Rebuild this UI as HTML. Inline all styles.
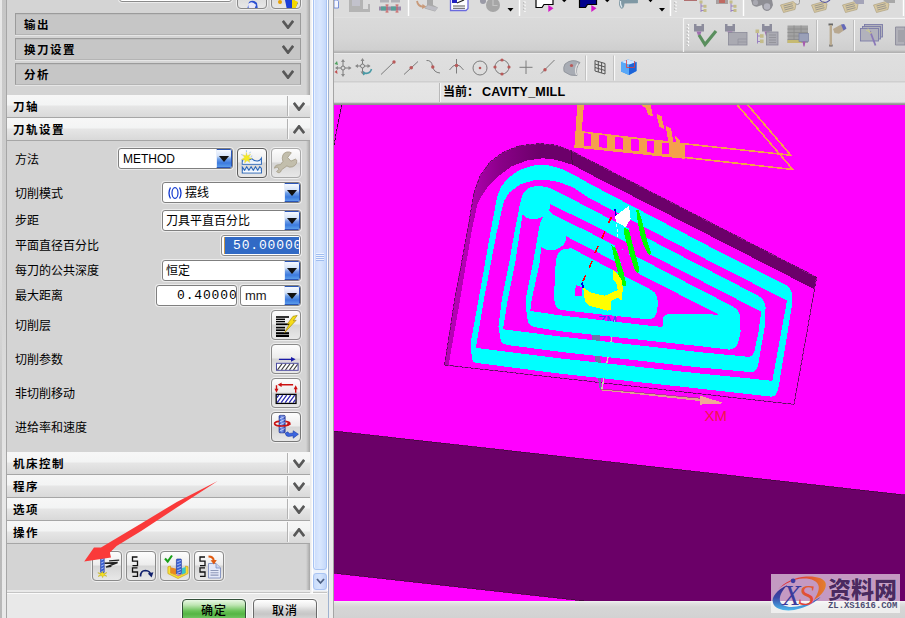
<!DOCTYPE html>
<html lang="zh-CN">
<head>
<meta charset="utf-8">
<title>CAVITY_MILL</title>
<style>
html,body{margin:0;padding:0;}
body{width:905px;height:618px;overflow:hidden;position:relative;background:#d4d4d4;
  font-family:"Liberation Sans","Noto Sans CJK SC",sans-serif;font-size:12px;color:#000;line-height:1;}
.a{position:absolute;box-sizing:border-box;}
.cn{font-family:"Liberation Sans","Noto Sans CJK SC",sans-serif;}
/* left frame */
#lb{left:0;top:0;width:7px;height:618px;background:linear-gradient(#c6c6c6,#d2d2d2 45%,#e8e8e8 80%,#e9e9e9);}
#lb:before{content:"";position:absolute;left:0;top:0;width:1.5px;height:618px;background:linear-gradient(#e8e8e8,#dcdcdc 45%,#bcbcbc 80%,#b8b8b8);}
#lb:after{content:"";position:absolute;left:5.6px;top:0;width:1.4px;height:618px;background:#a6a6a6;}
#panel{left:7px;top:0;width:303px;height:590px;background:#d4d4d4;}
#pshadow{left:306px;top:0;width:4px;height:590px;background:linear-gradient(90deg,rgba(150,150,150,0),rgba(150,150,150,.75));}
#foot{left:7px;top:590px;width:321px;height:28px;background:#e9e9e9;}
#footline{left:7px;top:592px;width:320px;height:2px;background:linear-gradient(#c4c4c4 0,#c4c4c4 1px,#fbfbfb 1px);}
/* sub groups */
.sg{left:15px;width:286px;height:22px;background:#c6c6c6;border:1px solid #9b9b9b;border-bottom-color:#b4b4b4;box-shadow:0 1px 0 #e6e6e6, inset 0 1px 0 #bdbdbd;}
.sg span{position:absolute;left:8px;top:5.5px;font-weight:bold;font-size:11.5px;letter-spacing:1.5px;}
.chev{position:absolute;width:12px;height:9px;}
/* headers */
.hd{left:7px;width:303px;height:23px;border-bottom:1px solid #a6a6a6;
  background:linear-gradient(#f7f7f7 0,#f3f4f4 10px,#e6e6e6 11px,#d9d9d9 22px);}
.hd span{position:absolute;left:6px;top:6.5px;font-weight:bold;font-size:11.5px;letter-spacing:1.5px;}
.hd i{position:absolute;left:280px;top:1px;width:2px;height:20px;background:linear-gradient(90deg,#b3b3b3 0,#b3b3b3 1px,#fafafa 1px);}
.lbl{left:15px;font-size:12px;white-space:nowrap;}
/* inputs */
.cb{height:21px;background:#fff;border:1px solid #7f7f7f;border-radius:3px;box-shadow:0 0 0 1px rgba(255,255,255,.55);font-size:12px;white-space:nowrap;overflow:hidden;}
.cb .t{position:absolute;left:4px;top:4px;}
.dd{position:absolute;right:0;top:0;width:16px;height:19px;border-radius:0 2px 2px 0;border:1px solid #2a55b8;border-left:1px solid #e8eefa;
  background:linear-gradient(#f6f9fe 0,#d5e3f9 6px,#6f9fe6 9px,#3c7ade 13px,#6aaef0 19px);box-sizing:border-box;}
.dd:after{content:"";position:absolute;left:2px;top:6px;border:5px solid transparent;border-top:6px solid #101010;border-bottom:0;}
.ib{width:30px;height:30px;border:1px solid #8a8a8a;border-radius:4px;box-shadow:0 0 0 1px rgba(255,255,255,.6);
  background:linear-gradient(#fdfdfd 0,#ececec 13px,#d6d6d6 14px,#e9e9e9 29px);overflow:hidden;}
.mono{font-family:"Liberation Mono",monospace;font-size:13px;letter-spacing:.85px;}
</style>
</head>
<body>
<div class="a" id="lb"></div>
<div class="a" id="panel"></div>
<div class="a" id="pshadow"></div>
<div class="a" id="foot"></div>
<div class="a" id="footline"></div>

<!-- top cut-off controls -->
<div class="a" style="left:119px;top:-20px;width:113px;height:22px;background:#fff;border:1px solid #8a8a8a;border-radius:3px;box-shadow:0 0 0 1px rgba(255,255,255,.55)"></div>
<div class="a ib" style="left:237px;top:-21px"><svg class="a" style="left:0;top:0" width="30" height="30"><path d="M9 30 L11 22 Q15 19 19 23 L20 30Z" fill="#2a4fd0"/><path d="M10 24 Q14 20 18 25 L16 30 L11 30Z" fill="#e8e8f8"/></svg></div>
<div class="a ib" style="left:271px;top:-21px"><svg class="a" style="left:0;top:0" width="30" height="30"><path d="M13 20 L20 19 L26 23 L22 30 L15 30Z" fill="#1c3fd8"/><path d="M20 19 L26 22 L23 30 L20 30Z" fill="#f4d800"/><circle cx="8" cy="22" r="2" fill="#e8a000"/></svg></div>

<!-- sub groups -->
<div class="a sg" style="top:13px"><span>输出</span><svg class="chev" style="left:266px;top:6px" viewBox="0 0 12 9"><path d="M0.8 0.8 L6 7.6 L11.2 0.8" fill="none" stroke="#585858" stroke-width="2.7"/></svg></div>
<div class="a sg" style="top:38px"><span>换刀设置</span><svg class="chev" style="left:266px;top:6px" viewBox="0 0 12 9"><path d="M0.8 0.8 L6 7.6 L11.2 0.8" fill="none" stroke="#585858" stroke-width="2.7"/></svg></div>
<div class="a sg" style="top:63px"><span>分析</span><svg class="chev" style="left:266px;top:6px" viewBox="0 0 12 9"><path d="M0.8 0.8 L6 7.6 L11.2 0.8" fill="none" stroke="#585858" stroke-width="2.7"/></svg></div>

<!-- headers -->
<div class="a hd" style="top:95px"><span>刀轴</span><i></i><svg class="chev" style="left:286px;top:7px" viewBox="0 0 12 9"><path d="M0.8 0.8 L6 7.6 L11.2 0.8" fill="none" stroke="#585858" stroke-width="2.7"/></svg></div>
<div class="a hd" style="top:118px"><span>刀轨设置</span><i></i><svg class="chev" style="left:286px;top:7px" viewBox="0 0 12 9"><path d="M0.8 8.2 L6 1.4 L11.2 8.2" fill="none" stroke="#585858" stroke-width="2.7"/></svg></div>
<div class="a hd" style="top:452px"><span>机床控制</span><i></i><svg class="chev" style="left:286px;top:7px" viewBox="0 0 12 9"><path d="M0.8 0.8 L6 7.6 L11.2 0.8" fill="none" stroke="#585858" stroke-width="2.7"/></svg></div>
<div class="a hd" style="top:475px"><span>程序</span><i></i><svg class="chev" style="left:286px;top:7px" viewBox="0 0 12 9"><path d="M0.8 0.8 L6 7.6 L11.2 0.8" fill="none" stroke="#585858" stroke-width="2.7"/></svg></div>
<div class="a hd" style="top:498px"><span>选项</span><i></i><svg class="chev" style="left:286px;top:7px" viewBox="0 0 12 9"><path d="M0.8 0.8 L6 7.6 L11.2 0.8" fill="none" stroke="#585858" stroke-width="2.7"/></svg></div>
<div class="a hd" style="top:521px"><span>操作</span><i></i><svg class="chev" style="left:286px;top:7px" viewBox="0 0 12 9"><path d="M0.8 8.2 L6 1.4 L11.2 8.2" fill="none" stroke="#585858" stroke-width="2.7"/></svg></div>

<!-- labels -->
<div class="a lbl" style="top:154px">方法</div>
<div class="a lbl" style="top:188px">切削模式</div>
<div class="a lbl" style="top:215px">步距</div>
<div class="a lbl" style="top:240px">平面直径百分比</div>
<div class="a lbl" style="top:265px">每刀的公共深度</div>
<div class="a lbl" style="top:290px">最大距离</div>
<div class="a lbl" style="top:320px">切削层</div>
<div class="a lbl" style="top:354px">切削参数</div>
<div class="a lbl" style="top:388px">非切削移动</div>
<div class="a lbl" style="top:422px">进给率和速度</div>

<!-- controls -->
<div class="a cb" style="left:118px;top:148px;width:115px"><span class="t">METHOD</span><div class="dd"></div></div>
<div class="a cb" style="left:162px;top:182px;width:139px"><svg class="a" style="left:3px;top:3px" width="18" height="14"><path d="M4.5 1.5 Q1.5 7 4.5 12.5 M13.5 1.5 Q16.5 7 13.5 12.5" fill="none" stroke="#1038d0" stroke-width="1.3"/><ellipse cx="9" cy="7" rx="3" ry="5.3" fill="none" stroke="#1038d0" stroke-width="1.2"/></svg><span class="t" style="left:22px">摆线</span><div class="dd"></div></div>
<div class="a cb" style="left:162px;top:210px;width:139px"><span class="t" style="left:3px">刀具平直百分比</span><div class="dd"></div></div>
<div class="a cb" style="left:221px;top:235px;width:80px;border-color:#8a8a8a"><div class="a" style="left:2px;top:1px;width:75px;height:17px;background:#316ac5;border-left:1px solid #c89a50"></div><span class="a mono" style="left:11px;top:3px;color:#fff">50.00000</span></div>
<div class="a cb" style="left:162px;top:260px;width:139px"><span class="t" style="left:3px">恒定</span><div class="dd"></div></div>
<div class="a cb" style="left:156px;top:285px;width:81px"><span class="a mono" style="left:20px;top:3px">0.40000</span></div>
<div class="a cb" style="left:240px;top:285px;width:61px"><span class="t" style="font-size:13px;top:3px;color:#1a1a1a">mm</span><div class="dd"></div></div>


<!-- method icon buttons -->
<div class="a ib" style="left:237px;top:148px;border:1.5px solid #5c5c5c"><svg class="a" style="left:-1.5px;top:-1.5px" width="30" height="30">
<path d="M5.3 13.2 L5.3 12 Q7 12 9.3 10.4 Q11.5 13.2 14.8 10.6 Q17.5 13.2 20.5 13 Q23 12.5 24.4 10.2 L24.4 16.3 H5.3Z" fill="#e4eefb" stroke="#2a66b8" stroke-width="1.1"/>
<path d="M5.6 15 H24.1" stroke="#fff" stroke-width="1.2"/>
<path d="M5.3 19.2 L7.6 22.2 L9.7 18.7 L11.9 22.2 L14.1 18.7 L16.3 22.2 L18.5 18.7 L20.7 22.2 L22.8 18.7 L24.4 20.5 V25 H5.3Z" fill="#e4eefb" stroke="#2a66b8" stroke-width="1.1"/>
<path d="M5.8 23.7 H24" stroke="#fff" stroke-width="1.1"/>
<path transform="translate(0 1)" d="M9.3 3.3 L10.3 6.7 L13.6 5.2 L11.8 8.3 L15 9.4 L11.8 10.4 L12.9 13.6 L10 11.6 L7.6 14.2 L7.9 10.9 L4.5 10.4 L7.5 8.6 L5.7 5.7 L8.8 6.8Z" fill="#f6ea20" stroke="#d8d060" stroke-width=".4"/>
<path d="M9.3 2.2 L9.5 4 M4.2 6.5 L5.8 7.3 M13.5 3.8 L12.5 5.3 M15.3 8 L13.8 8.4" stroke="#8ab8e0" stroke-width=".8"/>
</svg></div>
<div class="a ib" style="left:271px;top:148px;border-color:#a9a9a9"><svg class="a" style="left:-1px;top:-1px" width="30" height="30">
<path d="M11.9 7.1 Q13 4.5 15.9 4 Q18.5 3.6 20.3 4.8 L16.7 9.5 L19.9 13.1 L24.6 11.1 Q26 12 25.8 13.1 Q25.8 16 23.8 17.5 Q21.5 19.5 18.3 19.1 L15.9 17.9 L10.5 21.8 L9.5 24 Q8.5 25 7.1 24.6 L5.6 23.6 L8 21.2 L6.3 18.9 L3.4 20.2 Q3.6 17.8 6 17 L9.5 16.6 L11.9 13.5 Q10.6 10 11.9 7.1Z" fill="#c2beac" stroke="#a39c86" stroke-width=".8"/>
</svg></div>

<!-- row icon buttons -->
<div class="a ib" style="left:271px;top:310px"><svg class="a" style="left:0;top:0" width="30" height="30">
<g fill="#000"><rect x="4" y="5.2" width="13" height="1.6"/><rect x="4" y="7.6" width="9" height="1.4"/><rect x="4" y="9.9" width="9" height="1.4"/><rect x="4" y="12.4" width="13" height="1.7"/><rect x="4" y="15.8" width="9" height="1.6"/><rect x="4" y="18.4" width="9" height="1.6"/><rect x="4" y="21.2" width="13" height="2.2"/><rect x="4" y="24" width="13" height="2"/></g>
<path d="M21 5.3 L25.2 4.4 L21.3 9.8 L24.2 9.2 L12.5 21.8 L17.6 12.6 L15.2 13.2Z" fill="#f6dc18" stroke="#9c8200" stroke-width=".6"/>
</svg></div>
<div class="a ib" style="left:271px;top:344px"><svg class="a" style="left:0;top:0" width="30" height="30">
<path d="M6.9 14.3 H20" stroke="#1a1aa8" stroke-width="1.2"/><path d="M19 11.9 L23.6 14.3 L19 16.7Z" fill="#1a1aa8"/>
<rect x="4.5" y="18.3" width="21.6" height="7" fill="#fff" stroke="#4a4aa0" stroke-width="1"/>
<path d="M5.5 24.8 L10 18.8 M9.5 24.8 L14 18.8 M13.5 24.8 L18 18.8 M17.5 24.8 L22 18.8 M21.5 24.8 L25.6 19.4" stroke="#444" stroke-width="1.1"/>
</svg></div>
<div class="a ib" style="left:271px;top:378px"><svg class="a" style="left:-1px;top:-1px" width="30" height="30">
<path d="M10 6.8 H22.1" stroke="#cc1010" stroke-width="1.4"/><path d="M10.6 4.6 L6.7 6.8 L10.6 9Z" fill="#cc1010"/>
<path d="M5.5 7.3 V11.5" stroke="#cc1010" stroke-width="1.4"/><path d="M3.5 10.8 L5.5 14.8 L7.5 10.8Z" fill="#cc1010"/>
<path d="M24.7 10.5 V14.8" stroke="#cc1010" stroke-width="1.4"/><path d="M22.7 11.2 L24.7 7.2 L26.7 11.2Z" fill="#cc1010"/>
<rect x="5.2" y="16.4" width="19.8" height="9" fill="#fff" stroke="#000" stroke-width="1.3"/>
<path d="M6.2 24.6 L11.7 17.2 M10.2 24.6 L15.7 17.2 M14.2 24.6 L19.7 17.2 M18.2 24.6 L23.7 17.2 M22.2 24.6 L24.4 21.6 M6 19.6 L7.7 17.2" stroke="#2a2ab0" stroke-width="1.3"/>
</svg></div>
<div class="a ib" style="left:271px;top:412px;border-color:#777"><svg class="a" style="left:-1px;top:-1px" width="30" height="30">
<defs><linearGradient id="tg" x1="0" y1="0" x2="1" y2="0"><stop offset="0" stop-color="#2a49b8"/><stop offset=".45" stop-color="#7f9cf0"/><stop offset="1" stop-color="#2a3fa8"/></linearGradient></defs>
<rect x="8" y="3.3" width="6.2" height="17.6" rx="1.2" fill="url(#tg)" stroke="#22338c" stroke-width=".6"/>
<path d="M8.6 7 L13.6 4.6 M8.6 10 L13.6 7.6 M8.6 13 L13.6 10.6 M8.6 16 L13.6 13.6 M8.6 19 L13.6 16.6" stroke="#c6d3f8" stroke-width=".9"/>
<path d="M8.2 9.4 Q3.2 9.8 3.6 11.8 Q4.6 14.2 11.4 14 Q18.5 13.6 18.8 11.4 Q18.6 9.8 14.4 9.3" fill="none" stroke="#c81414" stroke-width="1.7"/>
<path d="M16.6 10.2 L20 12.6 L15.6 14.4Z" fill="#c81414"/>
<path d="M14.3 21 Q14.6 24.6 17.6 24.4 L22.2 23.8 V26.2 L27.4 22.2 L22.2 18.8 V21 L18.4 21.4 Q17.2 21.2 17 19.8Z" fill="#3b66e0" stroke="#1d3aa5" stroke-width=".6"/>
</svg></div>

<!-- operation buttons -->
<div class="a ib" style="left:92px;top:551px"><svg class="a" style="left:0;top:0" width="30" height="30">
<path d="M16.1 8.9 L26.2 8.1 M11.5 11.2 L24.6 10.5 L13 15.1 L18.4 14.3" fill="none" stroke="#222" stroke-width="1.4"/>
<rect x="7.6" y="5.2" width="3.6" height="15.5" rx=".8" fill="#3c63d6" stroke="#1c2f90" stroke-width=".6"/>
<path d="M8.2 8 L10.8 6.8 M8.2 11 L10.8 9.8 M8.2 14 L10.8 12.8 M8.2 17 L10.8 15.8 M8.2 20 L10.8 18.8" stroke="#c5d2f6" stroke-width=".8"/>
<path d="M9.4 19.4 L10.4 21.4 L14 20.6 L11.3 22.3 L13.8 24.2 L10.6 23.5 L9.6 25.6 L8.6 23.5 L5 24.4 L7.6 22.3 L4.8 20.8 L8.2 21.3Z" fill="#f4e020" stroke="#b8a300" stroke-width=".4"/>
</svg></div>
<div class="a ib" style="left:126px;top:551px"><svg class="a" style="left:0;top:0" width="30" height="30">
<path d="M10.5 5 H5.5 V9.2 H10.5 V13.6 H5.5 M10.5 15.8 H5.5 V20 H10.5 V24.4 H5.5" fill="none" stroke="#111" stroke-width="1.3"/>
<path d="M13.5 24.5 Q13.5 18.5 18.5 18.5 Q23 18.8 23.8 23" fill="none" stroke="#10206c" stroke-width="1.7"/>
<path d="M20.8 21.6 L24.6 25.6 L26.4 20.3Z" fill="#10206c"/>
</svg></div>
<div class="a ib" style="left:160px;top:551px"><svg class="a" style="left:0;top:0" width="30" height="30">
<path d="M6.9 14.8 L9.5 14 L9.5 21 L17 24 L24.6 21 L24.6 14 L27 14.8 L27 21.5 L17 26.5 L6.9 21.5Z" fill="#f6e23a" stroke="#d0a010" stroke-width=".7"/>
<path d="M9.5 15.2 L15.4 16.8 L15.4 23 L9.5 21Z" fill="#ea8a20"/>
<path d="M20.8 16.3 L24.6 15 L24.6 21 L20.8 22.6Z" fill="#38c8c8"/>
<path d="M15.4 23 L20.8 22.6 L17.2 24.1Z" fill="#e060c0"/>
<rect x="15.4" y="7" width="5" height="15" rx=".8" fill="#3c63d6" stroke="#1c2f90" stroke-width=".6"/>
<path d="M16.2 9.8 L19.8 8.4 M16.2 12.8 L19.8 11.4 M16.2 15.8 L19.8 14.4 M16.2 18.8 L19.8 17.4 M16.2 21.4 L19.8 20" stroke="#c5d2f6" stroke-width=".8"/>
<path d="M4 6.5 L6.7 9.5 L11 3.5" fill="none" stroke="#18a018" stroke-width="2.1"/>
</svg></div>
<div class="a ib" style="left:194px;top:551px"><svg class="a" style="left:0;top:0" width="30" height="30">
<path d="M10 5 H5 V9.2 H10 V13.6 H5 M10 15.8 H5 V20 H10 V24.4 H5" fill="none" stroke="#111" stroke-width="1.3"/>
<path d="M13.5 11.5 H21 L25.5 16 V26 H13.5Z" fill="#e4e9f8" stroke="#7f8fc0" stroke-width=".9"/>
<path d="M21 11.5 V16 H25.5" fill="#c8d2ee" stroke="#7f8fc0" stroke-width=".8"/>
<path d="M15.5 18.5 H23.5 M15.5 20.8 H23.5 M15.5 23.1 H23.5" stroke="#8d98b8" stroke-width="1.1"/>
<path d="M13.5 4.5 Q18.5 4.5 18.8 9" fill="none" stroke="#e05a10" stroke-width="2"/>
<path d="M15.6 8.2 L18.9 12.6 L21.8 8Z" fill="#e05a10"/>
</svg></div>

<!-- OK / Cancel -->
<div class="a" style="left:182px;top:599px;width:64px;height:24px;border:1.5px solid #33503a;border-radius:4px;box-shadow:0 0 0 1px rgba(255,255,255,.7);background:linear-gradient(#e9f8e4 0,#bfe6b4 5px,#68c257 11px,#55b544 14px,#8ad67c 22px);text-align:center;"><span style="position:relative;top:4.5px;font-size:12px;letter-spacing:1px;font-weight:500">确定</span></div>
<div class="a" style="left:253px;top:599px;width:64px;height:24px;border:1px solid #6a6a6a;border-radius:4px;box-shadow:0 0 0 1px rgba(255,255,255,.7);background:linear-gradient(#ffffff 0,#ededed 6px,#d0d0d0 11px,#c6c6c6 14px,#e0e0e0 22px);text-align:center;"><span style="position:relative;top:5px;font-size:12px;letter-spacing:1px;font-weight:500">取消</span></div>


<!-- scrollbar -->
<div class="a" style="left:310px;top:0;width:3px;height:593px;background:linear-gradient(90deg,#e8e8e8,#ffffff)"></div>
<div class="a" style="left:312px;top:0;width:16px;height:591px;background:#eef3fb;border-left:1px solid #fff;border-right:1px solid #fff"></div>
<div class="a" style="left:313px;top:-4px;width:14px;height:574px;border:1px solid #a9c4f3;border-radius:3px;background:linear-gradient(90deg,#cadcfc 0,#d9e7fe 45%,#d5e4fd 60%,#c4d8fa 100%);box-shadow:inset 1px 0 0 #e9f1fe"></div>
<div class="a" style="left:316px;top:253px;width:8px;height:8px;background:repeating-linear-gradient(#eef4ff 0,#eef4ff 1px,#9fbdf0 1px,#9fbdf0 2px)"></div>
<div class="a" style="left:313px;top:573px;width:14px;height:17px;border:1px solid #a9c4f3;border-radius:3px;background:linear-gradient(90deg,#c9dcfb,#d6e5fd 50%,#bcd2f7)"><svg class="a" style="left:2px;top:4px" width="9" height="7" viewBox="0 0 9 7"><path d="M1 1 L4.5 5 L8 1" fill="none" stroke="#4d6185" stroke-width="1.8"/></svg></div>
<div class="a" style="left:328px;top:0;width:6px;height:618px;background:linear-gradient(90deg,#9fb2cf 0,#9fb2cf 1px,#ececec 1px,#ececec 4.6px,#b4b4b4 4.6px,#9c9c9c 6px)"></div>

<!-- TB_START -->
<!-- top toolbars -->
<div class="a" style="left:334px;top:0;width:571px;height:17px;background:#dcdcdc"></div>
<div class="a" style="left:334px;top:17px;width:571px;height:36px;background:linear-gradient(#e6e6e6 0,#dadada 1px,#d6d6d6 20px,#cfcfcf 33px,#b4b4b4 35px,#b0b0b0 36px)"></div>
<div class="a" style="left:334px;top:53px;width:571px;height:30px;background:linear-gradient(#f4f4f4 0,#dfdfdf 1px,#dcdcdc 28px,#c2c2c2 29px,#f2f2f2 30px)"></div>
<div class="a" style="left:334px;top:83px;width:571px;height:21px;background:linear-gradient(#e6e6e6 0,#e3e3e3 19px,#b8b8b8 20px,#8c8c8c 21px)"></div>
<div class="a" style="left:439px;top:83px;width:2px;height:19px;background:linear-gradient(90deg,#b9b9b9 0,#b9b9b9 1px,#f6f6f6 1px)"></div>
<div class="a" style="left:443px;top:86px;font-weight:bold;font-size:12px;white-space:nowrap;letter-spacing:0"><span style="letter-spacing:0">当前：</span><span style="font-size:12.6px;letter-spacing:.15px;margin-left:3px">CAVITY_MILL</span></div>
<svg class="a" style="left:334px;top:0" width="571" height="104" viewBox="334 0 571 104">
<!-- row 1 -->
<g>
<path d="M334 0 H337.5 L338.5 1.5 V8 H334Z" fill="#f4f6ff" stroke="#5a78d0" stroke-width=".8"/>
<path d="M349 0 H363 V9 H368 V4 H370 V12 H349Z" fill="#b4b4b4"/><path d="M352 0 H360 V6 H352Z" fill="#c2c2cc"/>
<path d="M380 0 H389 V2.5 H380Z M391 0 H400 V2.5 H391Z" fill="#b2b2b8"/>
<rect x="379" y="6.5" width="22" height="4" fill="#9a8aa8"/><rect x="381" y="6.5" width="5" height="4" fill="#58a098"/><rect x="391" y="6.5" width="5" height="4" fill="#58a098"/>
<path d="M387 5 V12 M397 5 V12 M385.5 5 H388.5 M385.5 12 H388.5 M395.5 5 H398.5 M395.5 12 H398.5" stroke="#c85a5a" stroke-width="1"/>
<path d="M408.5 0 V16" stroke="#fff" stroke-width="1.4"/>
<path d="M417 1 Q418 7 424 6.5" fill="none" stroke="#c89a7a" stroke-width="1.8"/><path d="M422.5 4 L426.5 6.8 L422 9Z" fill="#c89a7a"/>
<path d="M427 0 H433 V5 L438 7.5 L435 11.5 L424.5 8.5 L427 5Z" fill="#a9a9a9"/><path d="M425 8 L435 11 L438 7.8 L428 5.2Z" fill="#bdbdc4"/>
<path d="M450.5 0 V10.5 H466 L468 8.5 V0" fill="#fdfdff" stroke="#6a6ade" stroke-width="1.3"/><path d="M453 6 H465 M453 8.3 H465" stroke="#444" stroke-width=".9"/><path d="M452 0 H457 V3 H452Z" fill="#2020c0"/><path d="M457 3 L464 0" stroke="#222" stroke-width="1.2"/>
<circle cx="493" cy="5" r="7" fill="#a6a6a6"/><circle cx="483" cy="1" r="3" fill="#9a9aa6"/><path d="M493 0 V5.5 H497.5" stroke="#c4c4c4" stroke-width="1.2" fill="none"/>
<path d="M507.5 8 H513.5 L510.5 11.5Z" fill="#000"/>
<path d="M519.5 0 V16" stroke="#fff" stroke-width="1.4"/>
<path d="M524.5 1.5 V12" stroke="#fff" stroke-width="2.2" stroke-dasharray="1.6 1.6"/><path d="M523.8 2 V12" stroke="#aaa" stroke-width="1" stroke-dasharray="1.6 1.6"/>
<path d="M536 0 V7.5 H542 L544 4.5 H553 V0" fill="#fff" stroke="#000" stroke-width="1.2"/><path d="M548.3 5 L553.5 8.3 L548.3 12Z" fill="#d418c8"/>
<path d="M562 0 H566.5 L564.2 2.3Z" fill="#000"/>
<path d="M579.5 0 V7.5 H585.5 L587.5 4.5 H596.5 V0" fill="#00008c" stroke="#000" stroke-width="1.2"/><path d="M591.3 5 L596.5 8.3 L591.3 12Z" fill="#d418c8"/>
<path d="M605 0 H609.5 L607.2 2.3Z" fill="#000"/>
<path d="M619 0 H624 V3 H638 V0 H619Z" fill="#8fa8b0"/><path d="M619.5 0 Q618 5 621 8.5 Q624 9.5 624.5 3.5 L637.5 3.2 V0Z" fill="#7f98a4"/><path d="M620.5 1 Q620 5 622 7.5" stroke="#dfeaf0" stroke-width="1.2" fill="none"/>
<path d="M648.5 0 H652.5 L650.5 2.2Z" fill="#000"/><path d="M659 8 H665 L662 11.5Z" fill="#000"/>
<path d="M670.5 0 V16" stroke="#fff" stroke-width="1.4"/>
<path d="M675.5 1.5 V12" stroke="#fff" stroke-width="2.2" stroke-dasharray="1.6 1.6"/><path d="M674.8 2 V12" stroke="#aaa" stroke-width="1" stroke-dasharray="1.6 1.6"/>
<path d="M684 0 H697 V1 H684Z" fill="#b07070"/><path d="M701 1 V12 M701 6 H704 M701 10.5 H704" stroke="#9a82c0" stroke-width="1" fill="none"/><rect x="699.5" y="0.5" width="3" height="3" fill="#c4bc8a"/><rect x="703.5" y="4.8" width="3" height="3" fill="#c4bc8a"/><rect x="703.5" y="9" width="3" height="3" fill="#c4bc8a"/>
<path d="M716 0 H728 V4 H716Z" fill="#a8a0a0"/><rect x="719" y="0" width="6" height="3" fill="#c06a62"/><path d="M731 1 V12 M731 6 H734 M731 10.5 H734" stroke="#9a82c0" stroke-width="1" fill="none"/><rect x="729.5" y="0.5" width="3" height="3" fill="#c4bc8a"/><rect x="733.5" y="4.8" width="3" height="3" fill="#c4bc8a"/><rect x="733.5" y="9" width="3" height="3" fill="#c4bc8a"/>
<path d="M743.5 0 V16" stroke="#fff" stroke-width="1.4"/>
<path d="M751 0 H772 L773 5 Q771 11 766.5 11 Q762 10 762 5 L759 6 Q756 8 752.5 5Z" fill="#8e8e94"/><circle cx="767" cy="6.5" r="3.2" fill="#b4b4be"/><circle cx="755.5" cy="2.5" r="2.6" fill="#a8a8b0"/>
<g fill="#d6c7a0" stroke="#a89a78" stroke-width=".6"><path d="M780.5 5 L793 1.5 L796 4 L795 9.5 L783.5 12.5Z"/><path d="M811.5 5 L824 1.5 L827 4 L826 9.5 L814.5 12.5Z"/><path d="M842.5 5 L855 1.5 L858 4 L857 9.5 L845.5 12.5Z"/><path d="M873.5 5 L886 1.5 L889 4 L888 9.5 L876.5 12.5Z"/></g>
<g stroke="#8a8a8a" stroke-width=".8"><path d="M783.5 6 L792.5 3.7 M784 8 L793 5.7 M784.5 10 L793.5 7.7"/><path d="M814.5 6 L823.5 3.7 M815 8 L824 5.7 M815.5 10 L824.5 7.7"/><path d="M845.5 6 L854.5 3.7 M846 8 L855 5.7 M846.5 10 L855.5 7.7"/><path d="M876.5 6 L885.5 3.7 M877 8 L886 5.7 M877.5 10 L886.5 7.7"/></g>
<path d="M796 4 Q800 6 799.5 0" fill="none" stroke="#9a9a9a" stroke-width="1"/><path d="M820 0 Q824 5 830 0" fill="none" stroke="#5a5aa0" stroke-width="1.1"/><path d="M853 0 H864 V4 H856Z" fill="#a4a4b8"/><path d="M883 0 H895 V3 H887Z" fill="#a8a8a8"/>
<path d="M903.5 0 V16" stroke="#fff" stroke-width="1.4"/>
</g>
<!-- row 2 -->
<g>
<path d="M683.5 52 V18.5 H905" fill="none" stroke="#f4f4f4" stroke-width="1.2"/>
<path d="M688 24 V46" stroke="#fff" stroke-width="2.2" stroke-dasharray="1.7 1.7"/><path d="M687.2 24.5 V46" stroke="#aaa" stroke-width="1" stroke-dasharray="1.7 1.7"/>
<!-- verify -->
<path d="M694 24 H696.5 V26 H701.5 V24 H704 V31.5 H694Z" fill="#8c8c9c"/><path d="M696.5 31.5 H701.5 L700 35.5 H698Z" fill="#a070b0"/>
<path d="M699 35 L705 44.5 L716 31" fill="none" stroke="#5a8f5e" stroke-width="3.2"/>
<!-- icon2 -->
<path d="M725 24 H727.5 V26 H732.5 V24 H735 V31.5 H725Z" fill="#8c8c9c"/><path d="M727.5 31.5 H732.5 L731 36 H729Z" fill="#a070b0"/>
<rect x="728.5" y="32.5" width="18.5" height="12.5" fill="#aaaab2" stroke="#8a8a98" stroke-width=".8"/><path d="M738 45 V39 H747 M738 42 H747" stroke="#96969e" stroke-width=".8" fill="none"/>
<!-- icon3 -->
<path d="M757.5 31 V43.5 M757.5 36 H760.5 M757.5 41.5 H760.5" stroke="#9a82c0" stroke-width="1" fill="none"/><rect x="755.5" y="29.5" width="3.6" height="3.6" fill="#c4bc8a"/><rect x="760" y="34.2" width="3.6" height="3.6" fill="#c4bc8a"/><rect x="760" y="39.5" width="3.6" height="3.6" fill="#c4bc8a"/>
<path d="M762 24 H764.5 V26 H769.5 V24 H772 V31.5 H762Z" fill="#8c8c9c"/><path d="M764.5 31.5 H769.5 L768 36 H766Z" fill="#a070b0"/>
<rect x="766.5" y="32" width="11.5" height="13" fill="#aaaab2" stroke="#8a8a98" stroke-width=".8"/><path d="M769 35 H776 M769 37.5 H776 M769 40 H776 M769 42.5 H776" stroke="#8e8e96" stroke-width=".8"/>
<!-- icon4 -->
<rect x="787.5" y="25.5" width="20.5" height="17.5" fill="#a2a2a2"/><path d="M787.5 29 H808 M787.5 32.5 H808 M787.5 36 H808 M787.5 39.5 H808 M794 25.5 V43 M801 25.5 V43" stroke="#8a8a8a" stroke-width=".8"/><rect x="787.5" y="40" width="14" height="3" fill="#c6ba72"/>
<rect x="799" y="33.5" width="9.5" height="8" fill="#9aa0b8" stroke="#7a80a0" stroke-width=".7"/><path d="M802.5 41.5 H805.5 L804.5 46.5 H803.5Z" fill="#a85ab0"/>
<path d="M816.5 20 V51" stroke="#bdbdbd" stroke-width="1"/><path d="M817.5 20 V51" stroke="#f6f6f6" stroke-width="1"/>
<!-- post + flag -->
<path d="M828.5 24.5 H833 M829.2 45.5 H832.6" stroke="#666" stroke-width="1.8"/><rect x="829.6" y="25" width="2.4" height="20.5" fill="#b9aa90"/>
<path d="M833 29 L841 24.5 L846 29 L839 33.8 L834.5 33Z" fill="#b8a890"/><path d="M841 24.5 L844.2 24 L846.5 28.5 L843.5 30.5Z" fill="#6468b8"/>
<path d="M853.5 20 V51" stroke="#bdbdbd" stroke-width="1"/><path d="M854.5 20 V51" stroke="#f6f6f6" stroke-width="1"/>
<!-- pages + wand -->
<g fill="#b2b2bc" stroke="#7c7ca8" stroke-width=".9"><rect x="864.5" y="24.5" width="18" height="12.5"/><rect x="862.5" y="26.5" width="18" height="12.5"/><rect x="860.5" y="28.5" width="18" height="12.5"/></g>
<path d="M870 31 L875.5 45.5" stroke="#8a78b8" stroke-width="1.8"/><path d="M866 30 L872 33 M868 28.5 L870.5 34" stroke="#cfd08a" stroke-width=".8"/>
<path d="M895.5 27 H905 V45 H895.5Z" fill="#b0b0b8" stroke="#8a8a9a" stroke-width=".9"/><path d="M898 30 H905 V42 H898Z" fill="#a2a2aa"/>
</g>
<!-- row 3 -->
<g fill="none" stroke="#7c7c7c" stroke-width="1">
<path d="M343 60.5 V75 M336 68 H350.5"/><path d="M343 59 L345 62 H341Z M343 77 L345 74 H341Z M351.5 68 L348.5 66 V70Z M335 68 L338 66 V70Z" fill="#8a8a8a" stroke="none"/><circle cx="343" cy="68" r="2" fill="#dcdcdc"/>
<path d="M334.5 64 L337 61 L338 65Z" fill="#50a060" stroke="none"/><path d="M334.5 72 L337 70 L337.5 74Z" fill="#c05050" stroke="none"/>
<path d="M362.5 59.5 V73 M356 66 H369.5"/><path d="M362.5 58 L364.5 61 H360.5Z M362.5 74.5 L364.5 71.5 H360.5Z M370.5 66 L367.5 64 V68Z M355 66 L358 64 V68Z" fill="#8a8a8a" stroke="none"/><circle cx="362.5" cy="66" r="2" fill="#dcdcdc"/>
<path d="M364 73 Q370 74.5 371.5 69" stroke="#4a9aa6" stroke-width="1.6"/><path d="M363 71 L366.5 73.5 L363 75.5Z" fill="#4a9aa6" stroke="none"/>
<path d="M381 74.5 L394 62"/><circle cx="394" cy="62" r="1.7" fill="#b85a5a" stroke="none"/>
<path d="M404 74.5 L418 61.5"/><circle cx="411.2" cy="67.8" r="1.8" fill="#b85a5a" stroke="none"/>
<path d="M426.5 60.5 Q431.5 60 432.5 66 Q433.5 72.5 440 73"/><circle cx="432.8" cy="67" r="1.7" fill="#b85a5a" stroke="none"/>
<path d="M456.5 59 V73.5 M449.5 70 Q456.5 59.5 463.5 70"/><circle cx="456.5" cy="65.5" r="1.7" fill="#b85a5a" stroke="none"/>
<circle cx="480" cy="68" r="7"/><circle cx="480" cy="68" r="1.3" fill="#b85a5a" stroke="none"/>
<circle cx="502" cy="67" r="7"/><g fill="#b85a5a" stroke="none"><circle cx="502" cy="60" r="1.6"/><circle cx="502" cy="74" r="1.6"/><circle cx="495" cy="67" r="1.6"/><circle cx="509" cy="67" r="1.6"/></g>
<path d="M526 60.5 V74 M519.5 67.3 H532.5"/>
<path d="M541 73.5 L554.5 60"/><circle cx="545" cy="69.8" r="1.7" fill="#b85a5a" stroke="none"/>
<path d="M565 64 Q572 58 580 62.5 Q575 68 577 75.5 Q570 76.5 564 71.5 Q563 67 565 64Z" fill="#a8acb4" stroke="#8a8e96" stroke-width=".8"/><path d="M578 63.5 Q574 69 576.5 75" stroke="#e0e0e0" stroke-width="1.3"/><circle cx="571.5" cy="65.5" r="1.6" fill="#b85a5a" stroke="none"/>
<path d="M586.5 55.5 V80.5" stroke="#f8f8f8" stroke-width="1.2"/><path d="M585.5 55.5 V80.5" stroke="#c2c2c2"/>
<path d="M595 60.5 L605 63.5 V74 L595 71Z M598.3 61.5 V72 M601.6 62.5 V73 M595 64 L605 67 M595 67.5 L605 70.5" stroke="#555"/>
<path d="M614.5 55.5 V80.5" stroke="#f8f8f8" stroke-width="1.2"/><path d="M613.5 55.5 V80.5" stroke="#c2c2c2"/>
</g>
<path d="M621 62 L628 59.5 L636.5 62 L636.5 71 L629 75 L621 71.5Z" fill="#3c8ef0"/><path d="M621 62 L629 64.8 L636.5 62 L628 59.5Z" fill="#cfe6ff"/><path d="M629 64.8 V75 L636.5 71 V62Z" fill="#1c64d8"/><path d="M621 62 L629 64.8 V75 L621 71.5Z" fill="#58a8f8"/><path d="M626.5 60 V67.5 H634.5 V61" fill="none" stroke="#e04040" stroke-width=".8"/>
</svg>
<!-- TB_END -->
<!-- VIEW_START -->
<!-- 3D viewport -->
<svg class="a" style="left:334px;top:104px" width="571" height="497" viewBox="334 104 571 497" shape-rendering="crispEdges">
<defs>
<linearGradient id="wg" gradientUnits="userSpaceOnUse" x1="468" y1="0" x2="540" y2="0"><stop offset="0" stop-color="#b400b4"/><stop offset=".45" stop-color="#8a0088"/><stop offset="1" stop-color="#6c006a"/></linearGradient>
</defs>
<rect x="334" y="104" width="571" height="497" fill="#ff00ff"/>
<!-- lower block face -->
<path d="M334 431 L905 495 L905 601 L584 601 L334 573.2Z" fill="#6b0068"/><path d="M334 431 L905 495 M584 601 L334 573.2" stroke="#38082f" stroke-width=".7" fill="none"/>
<path d="M334 104 L343 104 L338 150 L334 180Z" fill="#ff00ff"/>
<path d="M341.9 104 L334 144.8" stroke="#98109a" stroke-width="1" fill="none"/><path d="M341.9 104 L334 144.8" stroke="#30102c" stroke-width="1" stroke-dasharray="3 2" fill="none"/>
<!-- pocket wall -->
<path d="M444.6 365 L454.6 300 L467.3 232 L474 193 L479.8 176.4 L489.7 162.3 L503 152.4 L519.6 145.7 L539.5 143.6 L556 145.2 L571 150.7 L816.6 277.2 L814.3 289.2 L590 174.2 L572.6 164.8 L556 159.8 L542.8 158.2 L526.2 160.7 L511.3 166.5 L498 176.4 L488 186.4 L481.4 196.3 L477.3 204.6 L471.5 232 L460 300 L448.6 365Z" fill="url(#wg)"/>
<!-- pocket outline -->
<path d="M444.6 365 L454.6 300 L467.3 232 L474 193 L479.8 176.4 L489.7 162.3 L503 152.4 L519.6 145.7 L539.5 143.6 L556 145.2 L571 150.7 L816.6 277.2 L808.2 325 L794 404.4Z" fill="none" stroke="#a010a0" stroke-width="1"/>
<path d="M444.6 365 L454.6 300 L467.3 232 L474 193 L479.8 176.4 L489.7 162.3 L503 152.4 L519.6 145.7 L539.5 143.6 L556 145.2 L571 150.7 L816.6 277.2 L808.2 325 L794 404.4Z" fill="none" stroke="#301030" stroke-width=".8" stroke-dasharray="3 2" opacity=".75"/>
<path d="M571 150.7 L572.6 164.8" stroke="#4a0a48" stroke-width="1"/>
<path d="M591.7 335 L599.6 335.5 L601.6 389.8 L599.8 389.8Z" fill="#6a78a8"/>
<path d="M616 315.8 L601.7 389.6" stroke="#c4dcb0" stroke-width="1.3" fill="none"/>
<text x="598" y="325.2" font-family="Liberation Sans,sans-serif" font-size="13.2" fill="#2848ff">ZM</text>
<!-- ring 1 -->
<path fill="#00ffff" fill-rule="evenodd" d="M470.5 343.8 L478.5 300 L490.5 232 L497.2 196.3 L501.3 186.4 L508 178 L519.6 169.8 L532.8 165.6 L546 164.8 L559.3 168 L572.6 174 L590 184 L720 252 L786 285 Q791.5 288 792.3 296 L792.5 302 L778.8 386 Q777.3 396.5 771.7 396.7 L700 388.7 L560 373.7 L477.2 363 Q472.3 362.4 471.9 358.4Z
M475.8 347.8 L483.8 300 L496.8 232 L503.8 201.3 L509.6 192.2 L519.6 184.7 L532.8 180.5 L546 179.7 L559.3 182.2 L572.6 187.2 L590 198.5 L720 266.6 L787 300.4 L772.3 380.8 L700 373.5 L560 358.4Z"/>
<!-- ring 2 -->
<path fill="#00ffff" fill-rule="evenodd" d="M498.4 326.5 L501.7 300 L509.3 262 L514.5 232 L520 204 L522 196 Q524 190 531 187 Q541 184.5 551 188.5 L559.7 192.6 L590 208.5 L720 275.9 L755 294 Q764.5 298 765.6 307 L765 325 L758.4 363.5 Q757 372.5 750.4 372.1 L700 367.5 L560 351.8 L507.7 345.1 Q501 344 500.4 338.5Z
M503 329.2 L507.7 300 L515.3 262 L519.8 232 L522.6 214.5 Q527 219.5 533.2 219.2 Q539.5 219 543.8 215.8 Q551 211.5 549.8 203.9 L590 223.5 L720 290.5 L761.2 311.7 L758.5 332 L754.4 351.5 Q752.5 356.5 749 356.9 L700 352.2 L560 336.5Z"/>
<!-- ring 3 -->
<path fill="#00ffff" fill-rule="evenodd" d="M526.5 312 L525.6 300 L533.2 262 L538.4 232 L539.8 223.8 L543 216.5 Q546 212 549.6 210.6 L553.5 214.7 L590 232.7 L720 299.8 L732 306 Q739 309.5 740 316 L740.6 332 L739.2 338.3 Q737.5 349.5 729.2 349.6 L700 346.2 L560 331.2 L539.5 328 Q528.5 326.5 527.8 321Z
M530.3 311 L531.6 300 L539.8 262 L541.2 246.4 Q545 250.5 550.4 250.4 Q556 250.3 559.7 247.7 Q566.5 244 566.4 236.4 L590 248.6 L718.7 314.6 L673.7 313.8 Q664 313.5 663.2 318 L662.4 327 L640 324.6 L560 315.3Z"/>
<!-- ring 4 (centre) -->
<path fill="#00ffff" d="M554.4 290 L555 270 L556.5 258 Q557.5 252.5 562 250 Q566 248 572 248.5 L611.4 269.3 L640 284 L652.4 290.5 Q657.5 294 657.8 302 L657.3 310 Q656 319 650 319 L640 318.5 L590 313.2 L562 310 Q555 309 554.4 300Z"/>
<!-- step-over channels -->
<path fill="#ff00ff" d="M628.5 228.3 L640.3 234.5 L643.4 244.6 L647.2 252.9 L648.8 254.6 L633.4 246.4 L632.8 244.6 L630.6 236.3Z"/>
<path fill="#ff00ff" d="M614.8 245.5 L628.8 252.8 L630.4 256.9 L635.8 272.3 L621.5 264.8 L618.8 256.9Z"/>
<!-- green edges -->
<path fill="#00ff00" d="M636.2 209.6 L638.9 210.6 L641.7 219.7 L643.9 228 L646 236.3 L648.3 244.6 L651.2 252.9 L649.6 254.8 L647.2 252.9 L643.4 244.6 L640.6 236.3 L638.9 228 L637.4 219.7Z"/>
<path fill="#00ff00" d="M624 228 L628 229 L629.6 232 L632.9 245.3 L636.2 256.9 L639.6 271 L638 273 L635.4 271 L630.4 256.9 L626.3 241.9 L623.8 232Z"/>
<path fill="#00ff00" d="M611.4 245.3 L615.5 247.7 L618.8 256.9 L623.8 273.4 L626.3 285 L625 286.3 L622.2 285 L618 273.4 L613.9 256.9Z"/>
<!-- tool -->
<path fill="#ffffff" d="M614.9 216.4 L629 205.6 L630.6 218.9 L625.6 227.2 L616.5 222.2Z"/>
<path d="M615 209 L616 215.5" stroke="#0000e0" stroke-width="1.6"/>
<path d="M616.8 224 L617.6 237" stroke="#d8ffff" stroke-width="1" stroke-dasharray="3 2"/>
<g stroke="#ff0000" stroke-width="1.6"><path d="M611.5 217 L608.5 223"/><path d="M605 231.5 L601.8 238.5"/><path d="M598.2 246 L595 253"/><path d="M592.4 260.5 L589.2 267.5"/><path d="M585.8 275 L583 281"/></g>
<path d="M582.3 282.5 L582.8 288" stroke="#0000e0" stroke-width="2"/>
<path fill="#ff00ff" d="M575.7 285 L582.4 287.5 L582.4 296.6 L575 295.8Z"/>
<path fill="#ffff00" d="M583.2 287.5 L584.9 301.6 L589 305.8 L608.1 310.7 L611.4 309.1 L610.6 301.6 L617.2 297.5 L622.2 300.8 L622.7 286.7 L621.7 280.1 L618 274.3 L612.7 269.8 L613.4 280.1 L615.5 281.7 L617.2 285.9 L617.7 290 L604.8 295.8 L590.7 292.5Z"/>
<!-- axes -->
<path fill="#00ffff" d="M560 315.3 L640 324.6 L662.4 327 L663 333 L560 331.2Z" opacity="0"/>
<path d="M600.5 389.3 L700 398.6 L700 401 L600.5 390.3Z" fill="#e0a090"/><path d="M600.5 389 L700 398.3" stroke="#805050" stroke-width=".5" fill="none"/>
<path d="M700 395.6 L724.6 403.3 L700 404.6Z" fill="#f0a898"/>
<text x="704.5" y="420.5" font-family="Liberation Sans,sans-serif" font-size="15" fill="#f0184c">XM</text>
<!-- holder wireframe -->
<g fill="#f4a04c">
<path d="M577.3 104 L584 104 L582.6 120 L582 131.2 L684.7 143 L684.7 158.8 L574.3 147.5 L575.6 130Z"/>
<path d="M641 104 L645 104 L646 108 L643 107Z"/>
<path d="M644.9 104 L650.5 104 L653 116.5 L647.8 114.5Z"/>
<path d="M656.3 113.5 L661.5 116 L664.4 129 L659.2 126.5Z"/>
<path d="M665.6 125.5 L671 128.5 L673.6 143 L668.4 142Z"/>
<path d="M675 136 L679.5 139.5 L682.6 154 L677.6 153Z"/>
</g>
<g fill="#ff00ff"><path d="M583.9 133.0 L591.3 133.9 L591.3 146.3 L583.9 145.6Z"/><path d="M599.3 134.8 L607.2 135.8 L607.2 148.0 L599.3 147.2Z"/><path d="M615.2 136.8 L623.1 137.8 L623.1 149.6 L615.2 148.8Z"/><path d="M631.1 138.7 L639.0 139.7 L639.0 151.3 L631.1 150.4Z"/><path d="M647.0 140.7 L654.2 141.5 L654.2 152.8 L647.0 152.1Z"/><path d="M662.1 142.5 L669.3 143.4 L669.3 154.4 L662.1 153.7Z"/><path d="M676 146 L684.7 147 L684.7 155.2 L677.5 154.5Z" opacity="0"/></g>
<g fill="none" stroke="#f4a04c" stroke-width="1.6">
<path d="M684.7 143.8 L790.8 155.2 L747 104"/><path d="M684.7 157.4 L792.9 169.5 L736.4 104"/>
</g>
</svg>
<!-- VIEW_END -->
<!-- OV_START -->
<div class="a" style="left:334px;top:104px;width:571px;height:1px;background:#8f948f"></div>
<!-- status bar -->
<div class="a" style="left:334px;top:601px;width:571px;height:17px;background:linear-gradient(#f2f2f2 0,#e2e2e2 2px,#d6d6d6 6px,#d2d2d2 17px)"></div>
<!-- watermark -->
<div class="a" style="left:771px;top:574px;width:129px;height:39px;background:rgba(255,255,255,.6)"></div>
<svg class="a" style="left:768px;top:570px" width="70" height="46" viewBox="768 570 70 46">
<defs><linearGradient id="lgb" x1="0" y1="0" x2="0" y2="1"><stop offset="0" stop-color="#3a2688"/><stop offset=".5" stop-color="#3a4aa8"/><stop offset="1" stop-color="#4ab8ee"/></linearGradient>
<linearGradient id="lgr" x1="0" y1="0" x2="1" y2="0"><stop offset="0" stop-color="#e02438"/><stop offset=".55" stop-color="#e04a34"/><stop offset="1" stop-color="#e2802e"/></linearGradient>
<linearGradient id="lgs" x1="0" y1="0" x2="0" y2="1"><stop offset="0" stop-color="#e2662e"/><stop offset="1" stop-color="#e03a3a"/></linearGradient></defs>
<path d="M787.3 585 C777 590 771 597 773 603 C775 610 788 612.5 800 608.5 C809 606 816 601.5 820.6 597 C815 600.5 806 605 797 606.5 C788 608 781.5 606 780 601 C779 596 782.5 590 787.3 585Z" fill="url(#lgb)"/>
<path d="M777.3 590 C785 582 795 577 806 576.5 C816 576 824 578 825.6 583 C827 588 822 595.5 813.6 600.2 C817 595.5 819.5 590 818.6 586 C817.5 581 811 578.3 803 578.6 C794 579 785 583.5 777.3 590Z" fill="url(#lgr)"/>
<circle cx="793.1" cy="580.8" r="2.4" fill="#3e3aa0"/>
<text x="782.5" y="604.8" font-family="Liberation Serif,serif" font-style="italic" font-size="30" fill="#3a3a9c" textLength="18" lengthAdjust="spacingAndGlyphs">X</text>
<text x="798.5" y="604.8" font-family="Liberation Serif,serif" font-style="italic" font-size="30" fill="url(#lgs)" textLength="16" lengthAdjust="spacingAndGlyphs">S</text>
</svg>
<div class="a" style="left:828px;top:576.5px;width:72px;height:26px;font-family:'Liberation Sans','Noto Sans CJK SC',sans-serif;font-weight:900;font-size:23px;line-height:26px;color:#4b2a60;white-space:nowrap;letter-spacing:0;text-shadow:0 0 1px #e8d8ee">资料网</div>
<div class="a" style="left:828px;top:602px;width:72px;height:10px;font-family:'Liberation Mono',monospace;font-weight:bold;font-size:8.9px;line-height:9px;color:#4c4c72;white-space:nowrap;letter-spacing:0">ZL.XS1616.COM</div>
<!-- red pointer arrow -->
<svg class="a" style="left:70px;top:470px" width="160" height="110" viewBox="70 470 160 110"><path d="M217.7 481 L176.8 502 L141.2 523.4 L101 547.5 L94 547.4 L84.2 561.6 L111 557.5 L109.9 552.5 L116.6 546 L141.2 531 L176.8 507.5Z" fill="#fa3a3a"/></svg>
<!-- OV_END -->
</body>
</html>
